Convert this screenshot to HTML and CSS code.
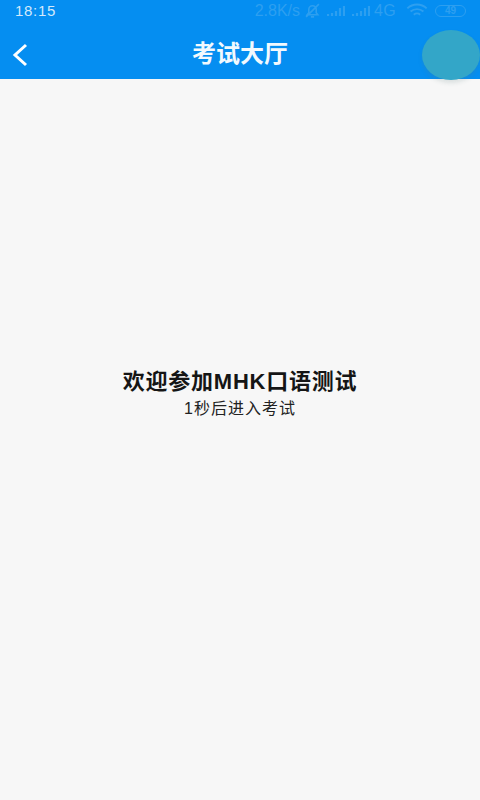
FILE: index.html
```html
<!DOCTYPE html>
<html lang="zh-CN">
<head>
<meta charset="utf-8">
<title>考试大厅</title>
<link rel="stylesheet" href="styles.css">
</head>
<body>
<header class="top">
  <div class="status">
    <span class="clock">18:15</span>
    <div class="indicators">
      <span class="speed">2.8K/s</span>
      <svg class="ic bell" viewBox="0 0 16 14"><path d="M3 11h10l-1.500-2V6a3.500 3.500 0 0 0-7 0v3zM6.500 13h3M2 13L14 1" fill="none" stroke="currentColor" stroke-width="1.500"/></svg>
      <svg class="ic sig" viewBox="0 0 18 12"><path d="M1 11V9M5 11V8M9 11V6M13 11V3M17 11V1" fill="none" stroke="currentColor" stroke-width="2.200"/></svg>
      <svg class="ic sig" viewBox="0 0 18 12"><path d="M1 11V9M5 11V8M9 11V6M13 11V3M17 11V1" fill="none" stroke="currentColor" stroke-width="2.200"/></svg>
      <span class="net">4G</span>
      <svg class="ic wifi" viewBox="0 0 20 14"><path d="M1 5a13 13 0 0 1 18 0M4 8a9 9 0 0 1 12 0M7 11a4.500 4.500 0 0 1 6 0" fill="none" stroke="currentColor" stroke-width="1.800"/></svg>
      <span class="batt">49</span>
    </div>
  </div>
  <div class="bar">
    <svg class="back" viewBox="0 0 16 24"><path d="M14 2L3 12l11 10" fill="none" stroke="#fff" stroke-width="3"/></svg>
    <h1 class="title">考试大厅</h1>
  </div>
  <div class="bubble"></div>
</header>
<main class="content">
  <p class="welcome">欢迎参加MHK口语测试</p>
  <p class="count">1秒后进入考试</p>
</main>
</body>
</html>
```
FILE: styles.css
```css
* { box-sizing: border-box; }
html, body { margin: 0; height: 100%; }
body {
  width: 480px;
  height: 800px;
  overflow: hidden;
  display: flex;
  flex-direction: column;
  background: #f7f7f7;
  font-family: "Liberation Sans", "Noto Sans CJK SC", sans-serif;
}
.top {
  position: relative;
  flex: none;
  height: 79px;
  background: #058ef1;
  color: #fff;
}
.status {
  height: 21px;
  padding: 0 14px 0 15px;
  display: flex;
  align-items: center;
  justify-content: space-between;
}
.clock { font-size: 15px; color: #d3e9fb; letter-spacing: 0.7px; }
.indicators {
  display: flex;
  align-items: center;
  gap: 4px;
  font-size: 16px;
  color: #2d9ff0;
}
.ic { display: block; }
.bell { width: 17px; height: 15px; margin: 0 2px 0 0; }
.sig { width: 18px; height: 12px; margin-right: 3px; }
.sig + .net { margin-left: -3px; }
.net { letter-spacing: 0.3px; }
.wifi { width: 22px; height: 15px; margin: 0 3px 0 6px; }
.batt {
  width: 31px;
  height: 12px;
  border: 1.500px solid currentColor;
  border-radius: 6px;
  display: flex;
  align-items: center;
  justify-content: center;
  font-size: 10px;
  font-weight: bold;
  line-height: 9px;
}
.bar {
  height: 58px;
  padding-top: 8px;
  padding-bottom: 6px;
  display: flex;
  align-items: center;
  justify-content: center;
  position: relative;
}
.back { position: absolute; left: 12px; top: 22px; width: 16px; height: 24px; }
.title { margin: 0; font-size: 24px; font-weight: bold; color: #f2f9fe; }
.bubble {
  position: absolute;
  left: 422px;
  top: 30px;
  width: 58px;
  height: 50px;
  border-radius: 50%;
  background: #33a6c8;
  box-shadow: 0 3px 4px rgba(90, 120, 120, 0.18);
}
.content {
  flex: 1;
  display: flex;
  flex-direction: column;
  align-items: center;
  padding-top: 289px;
}
.welcome { margin: 0; font-size: 22px; line-height: 28px; font-weight: bold; color: #151515; letter-spacing: 0.75px; }
.count { margin: 3px 0 0; font-size: 16px; line-height: 20px; color: #222; letter-spacing: 1px; }
```
